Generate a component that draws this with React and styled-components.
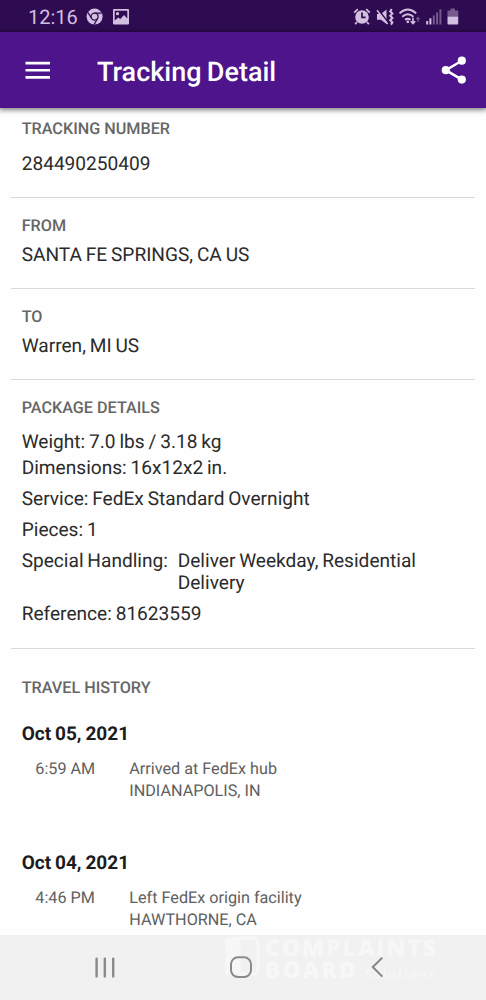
import React from 'react'
import styled, { createGlobalStyle } from "styled-components";

const GlobalStyle = createGlobalStyle`
*{
box-sizing: border-box;
}
body{
margin: 0;
background: #fefefe;
font-family: Roboto, "Liberation Sans", sans-serif;
text-rendering: geometricPrecision;
}
`
const Container = styled.div`
display: flex;
flex-direction: column;
width: 486px;
height: 1000px;
overflow: hidden;
background: #fefefe;
`
const StatusBar = styled.div`
display: flex;
align-items: center;
justify-content: space-between;
flex: none;
height: 32px;
padding: 1px 27px 0 28px;
background: #2f0b51;
color: #d3bfe0;
`
const Clock = styled.span`
width: 50px;
margin-right: 8px;
font-size: 20px;
line-height: 32px;
`
const StatusGroup = styled.div`
display: flex;
align-items: center;
`
const AppBar = styled.header`
display: flex;
align-items: center;
flex: none;
height: 76px;
padding: 0 19px 0 25px;
background: #4d148c;
color: #fff;
box-shadow: 0 1px 5px 1px rgba(0,0,0,0.5);
z-index: 1;
`
const Title = styled.h1`
flex: 1;
margin: 3px 0 0 47px;
font-size: 27px;
font-weight: 500;
line-height: 32px;
word-spacing: -1.4px;
`
const IconButton = styled.button`
display: flex;
padding: 0;
border: 0;
background: none;
color: inherit;
`
const Content = styled.main`
flex: 1;
min-height: 0;
overflow: hidden;
padding: 0 11px;
`
const Section = styled.section`
padding: ${props => props.$top || 17}px 11px ${props => props.$bottom || 22}px 10.7px;
border-bottom: 1px solid #d9d9d9;
&:last-child{
border-bottom: 0;
}
`
const Label = styled.h2`
margin: 0;
font-size: 16.2px;
font-weight: 500;
line-height: 22px;
color: #666;
`
const Value = styled.div`
margin-top: ${props => props.$gap || 7}px;
font-size: 19.1px;
line-height: ${props => props.$line || 22}px;
word-spacing: -0.9px;
color: #2b2b2b;
`
const Handling = styled(Value)`
display: grid;
grid-template-columns: 156px 260px;
`
const Day = styled.div`
margin-top: ${props => props.$gap}px;
`
const DayTitle = styled.h3`
margin: 0 0 13px;
font-size: 19px;
font-weight: 700;
line-height: 22px;
word-spacing: -0.8px;
color: #1c1c1c;
`
const Event = styled.div`
display: grid;
grid-template-columns: 94px 1fr;
padding-left: 13.6px;
font-size: 16.2px;
line-height: 22px;
color: #606060;
`
const NavBar = styled.nav`
display: grid;
grid-template-columns: 116px 250px 1fr;
position: relative;
flex: none;
height: 65px;
background: #f1f1f1;
`
const NavItem = styled.div`
display: flex;
justify-content: ${props => props.$align};
padding-top: 21px;
z-index: 1;
`
const Watermark = styled.div`
display: flex;
position: absolute;
left: 225px;
top: 1px;
gap: 5px;
color: #f7f7f7;
`
const WatermarkText = styled.div`
display: grid;
grid-template-rows: 22px 22px;
font-family: "Open Sans", sans-serif;
font-size: 23px;
font-weight: 800;
line-height: 22px;
letter-spacing: 1.9px;
white-space: nowrap;
small{
font-size: 12px;
font-weight: 600;
}
`

const days = [
  { date: "Oct 05, 2021", time: "6:59 AM", status: "Arrived at FedEx hub", place: "INDIANAPOLIS, IN", gap: 24 },
  { date: "Oct 04, 2021", time: "4:46 PM", status: "Left FedEx origin facility", place: "HAWTHORNE, CA", gap: 50 },
]

const LeftStatusIcons = () => (
  <svg width="44" height="18" viewBox="0 0 44 18">
    <circle cx="8.6" cy="8.6" r="8" fill="#d3bfe0" />
    <circle cx="8.6" cy="8.6" r="3.5" fill="none" stroke="#2f0b51" strokeWidth="1.2" />
    <path d="M8.6 5.1H15.6M5.6 10.4L2 4.6M11.6 10.4L8.2 16.4" stroke="#2f0b51" strokeWidth="1.2" />
    <path fillRule="evenodd" fill="#d3bfe0" d="M28 1H42Q43 1 43 2V15.5Q43 16.5 42 16.5H28Q27 16.5 27 15.5V2Q27 1 28 1ZM28.7 2.7V12.5L32.2 9.5L34.3 11L38 7L41.3 10.5V2.7Z" />
    <circle cx="31.5" cy="5.7" r="1.6" fill="#d3bfe0" />
  </svg>
)

const RightStatusIcons = () => (
  <svg width="106" height="18" viewBox="0 0 106 18" fill="none" stroke="#d3bfe0">
    <circle cx="9" cy="9" r="6.8" fill="#d3bfe0" stroke="none" />
    <path d="M1.2 4.6L4.8 1.2M13.2 1.2L16.8 4.6M4 14L2.2 16.2M14 14L15.8 16.2" strokeWidth="1.8" />
    <path d="M9 4.6V9.3H12.6" stroke="#2f0b51" strokeWidth="1.7" />
    <path d="M24 6H28L33.5 1.5V16L28 11.8H24Z" fill="#d3bfe0" stroke="none" />
    <path d="M25 1.2L35.4 14.8" stroke="#2f0b51" strokeWidth="1.6" />
    <path d="M24 2.2L34.6 16" strokeWidth="1.5" />
    <path d="M38.8 1.2L37.2 3.4L39.4 5.6L37.2 7.8L39.4 10L37.2 12.2L39.4 14.4L38 16.6" strokeWidth="2" />
    <path d="M46.5 5.4Q54.8 -2.2 63.2 5.4M49.2 8.8Q54.8 3.8 60.4 8.8M52 11.8Q54.8 9.5 57.6 11.8" strokeWidth="1.9" />
    <circle cx="54.8" cy="13.8" r="1.4" fill="#d3bfe0" stroke="none" />
    <path d="M60 9.7V15.4M57.8 13.2L60 15.6L62.2 13.2" strokeWidth="1.6" />
    <path d="M65 14V9.8M63.3 11.3L65 9.4L66.7 11.3" strokeWidth="1.2" stroke="#75598f" />
    <path d="M74.2 16.5V13M77.4 16.5V10.2" strokeWidth="2" />
    <path d="M80.8 16.5V7.4M84.1 16.5V4.4M87.4 16.5V1.2" strokeWidth="2" stroke="#75598f" />
    <path d="M97.5 0.5H102V2.5H105.2V8.4H94.5V2.5H97.5Z" fill="#75598f" stroke="none" />
    <path d="M94.5 8.4H105.2V15.7Q105.2 16.5 104.4 16.5H95.3Q94.5 16.5 94.5 15.7Z" fill="#d3bfe0" stroke="none" />
  </svg>
)

const App = () => {
  return (
    <Container>
      <GlobalStyle />
      <StatusBar>
        <StatusGroup>
          <Clock>12:16</Clock>
          <LeftStatusIcons />
        </StatusGroup>
        <RightStatusIcons />
      </StatusBar>

      <AppBar>
        <IconButton aria-label="Menu">
          <svg width="25" height="18" viewBox="0 0 25 18">
            <path d="M0.5 2.1H25M0.5 9.3H25M0.5 16.4H25" stroke="#fff" strokeWidth="2.6" />
          </svg>
        </IconButton>
        <Title>Tracking Detail</Title>
        <IconButton aria-label="Share">
          <svg width="26" height="28" viewBox="0 0 26 28" fill="#fff">
            <path d="M20.8 4.7L4.8 14.2L20.8 23.6" fill="none" stroke="#fff" strokeWidth="2.5" />
            <circle cx="20.8" cy="4.7" r="4.1" />
            <circle cx="4.8" cy="14.2" r="4.1" />
            <circle cx="20.8" cy="23.6" r="4.1" />
          </svg>
        </IconButton>
      </AppBar>

      <Content>
        <Section $top={10}>
          <Label>TRACKING NUMBER</Label>
          <Value $gap={13}>284490250409</Value>
        </Section>
        <Section>
          <Label>FROM</Label>
          <Value>SANTA FE SPRINGS, CA US</Value>
        </Section>
        <Section>
          <Label>TO</Label>
          <Value>Warren, MI US</Value>
        </Section>
        <Section $bottom={23}>
          <Label>PACKAGE DETAILS</Label>
          <Value $gap={10} $line={26}>
            Weight: 7.0 lbs / 3.18 kg<br />
            Dimensions: 16x12x2 in.
          </Value>
          <Value>Service: FedEx Standard Overnight</Value>
          <Value $gap={9}>Pieces: 1</Value>
          <Handling $gap={9}>
            <span>Special Handling:</span>
            <span>Deliver Weekday, Residential Delivery</span>
          </Handling>
          <Value $gap={9}>Reference: 81623559</Value>
        </Section>
        <Section $top={28}>
          <Label>TRAVEL HISTORY</Label>
          {days.map(day => (
            <Day key={day.date} $gap={day.gap}>
              <DayTitle>{day.date}</DayTitle>
              <Event>
                <span>{day.time}</span>
                <span>{day.status}<br />{day.place}</span>
              </Event>
            </Day>
          ))}
        </Section>
      </Content>

      <NavBar>
        <Watermark>
          <svg width="35" height="42" viewBox="0 0 35 42" fill="none" stroke="#f7f7f7" strokeWidth="3">
            <path d="M2 4L14 2V36L2 38Z" fill="#f7f7f7" />
            <path d="M14 2H28Q33 2 33 7V33Q33 38 28 38H14" />
          </svg>
          <WatermarkText>
            <div>COMPLAINTS</div>
            <div>BOARD <small>Solutions</small></div>
          </WatermarkText>
        </Watermark>
        <NavItem $align="flex-end">
          <svg width="21" height="22" viewBox="0 0 21 22">
            <path d="M1.6 2.6V20.4M9.8 2.6V20.4M18.2 2.6V20.4" stroke="#8a8a8a" strokeWidth="2.4" strokeLinecap="round" />
          </svg>
        </NavItem>
        <NavItem $align="center">
          <svg width="24" height="24" viewBox="0 0 24 24">
            <rect x="2" y="1.3" width="20" height="19.8" rx="7" fill="none" stroke="#8a8a8a" strokeWidth="2" />
          </svg>
        </NavItem>
        <NavItem $align="flex-start">
          <svg width="19" height="22" viewBox="-5 0 19 22">
            <path d="M11.3 1.6L1.8 11L11.3 20.6" fill="none" stroke="#858585" strokeWidth="2" />
          </svg>
        </NavItem>
      </NavBar>
    </Container>
  )
}

export default App
